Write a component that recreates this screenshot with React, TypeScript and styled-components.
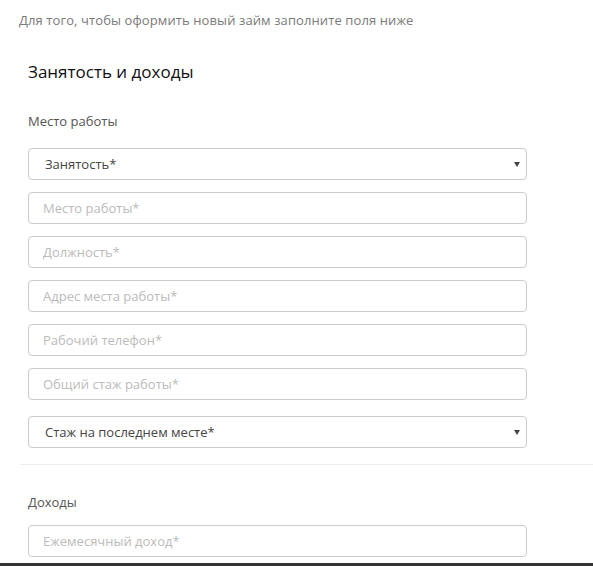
import styled, { createGlobalStyle } from "styled-components";

const GlobalStyle = createGlobalStyle`
  html, body {
    margin: 0;
    padding: 0;
    background: #fff;
    font-family: "Open Sans", "Noto Sans", Arial, sans-serif;
  }
`;

const Page = styled.div`
  width: 593px;
  height: 566px;
  overflow: hidden;
  display: flex;
  flex-direction: column;
  padding-top: 11px;
  box-sizing: border-box;
`;

const Intro = styled.p`
  margin: 0;
  padding-left: 19px;
  font-size: 13px;
  letter-spacing: 0.1px;
  line-height: 18px;
  color: #7a7a7a;
`;

const Group = styled.section<{ $top: number }>`
  display: flex;
  flex-direction: column;
  padding-left: 28px;
  margin-top: ${(p) => p.$top}px;
`;

const Title = styled.h2`
  margin: 0;
  font-size: 17px;
  line-height: 24px;
  font-weight: 400;
  color: #111;
`;

const Label = styled.h3<{ $top: number }>`
  margin: ${(p) => p.$top}px 0 0 0;
  font-size: 13px;
  line-height: 18px;
  font-weight: 400;
  color: #555;
`;

const Fields = styled.div<{ $top: number }>`
  display: flex;
  flex-direction: column;
  gap: 12px;
  margin-top: ${(p) => p.$top}px;
  width: 499px;
`;

const Input = styled.input`
  box-sizing: border-box;
  height: 32px;
  width: 100%;
  padding: 0 14px;
  border: 1px solid #ccc;
  border-radius: 4px;
  font-family: inherit;
  font-size: 13px;
  color: #333;
  background: #fff;
  outline: none;
  &::placeholder {
    color: #bbb;
  }
`;

const SelectBox = styled.div<{ $extra?: number }>`
  position: relative;
  box-sizing: border-box;
  height: 32px;
  width: 100%;
  margin-top: ${(p) => p.$extra ?? 0}px;
  padding: 0 28px 0 16px;
  display: flex;
  align-items: center;
  border: 1px solid #ccc;
  border-radius: 4px;
  font-size: 13px;
  color: #444;
  background: #fff;
`;

const Arrow = styled.span`
  position: absolute;
  right: 6px;
  top: 50%;
  margin-top: -2px;
  width: 0;
  height: 0;
  border-left: 3px solid transparent;
  border-right: 3px solid transparent;
  border-top: 5px solid #444;
`;

const Divider = styled.hr`
  margin: 16px 0 0 20px;
  border: 0;
  border-top: 1px solid #eee;
  height: 0;
`;

const BottomBar = styled.div`
  margin-top: auto;
  height: 3px;
  background: #333;
`;

const Select = ({ label, extra }: { label: string; extra?: number }) => (
  <SelectBox $extra={extra}>
    {label}
    <Arrow />
  </SelectBox>
);

export default function App() {
  return (
    <>
      <GlobalStyle />
      <Page>
        <Intro>Для того, чтобы оформить новый займ заполните поля ниже</Intro>
        <Group $top={31}>
          <Title>Занятость и доходы</Title>
          <Label $top={28}>Место работы</Label>
          <Fields $top={18}>
            <Select label="Занятость*" />
            <Input placeholder="Место работы*" />
            <Input placeholder="Должность*" />
            <Input placeholder="Адрес места работы*" />
            <Input placeholder="Рабочий телефон*" />
            <Input placeholder="Общий стаж работы*" />
            <Select label="Стаж на последнем месте*" extra={4} />
          </Fields>
        </Group>
        <Divider />
        <Group $top={28}>
          <Label $top={0}>Доходы</Label>
          <Fields $top={14}>
            <Input placeholder="Ежемесячный доход*" />
          </Fields>
        </Group>
        <BottomBar />
      </Page>
    </>
  );
}
